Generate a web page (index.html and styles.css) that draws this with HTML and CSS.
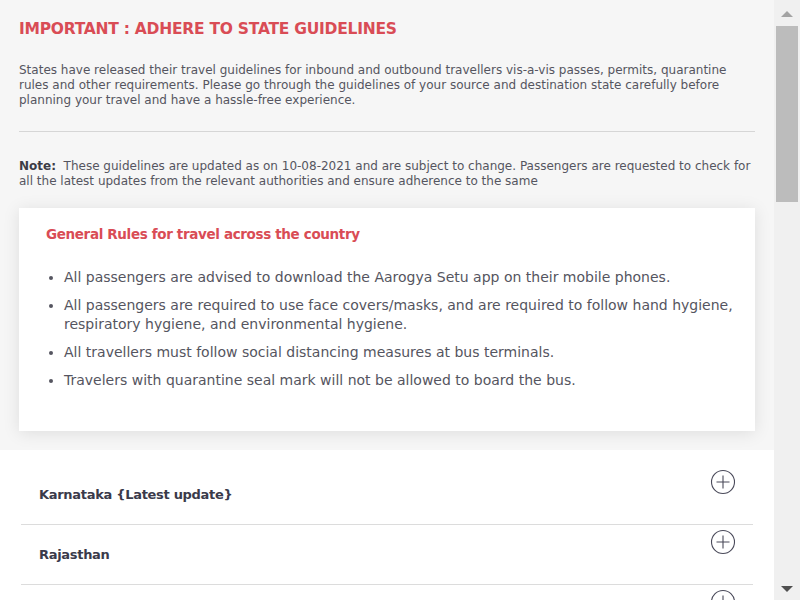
FILE: index.html
```html
<!DOCTYPE html>
<html lang="en">
<head>
<meta charset="utf-8">
<title>State Guidelines</title>
<link rel="stylesheet" href="styles.css">
</head>
<body>
<div class="app">
<main class="page">
  <section class="intro">
    <h1 class="title">IMPORTANT : ADHERE TO STATE GUIDELINES</h1>
    <p class="lead">States have released their travel guidelines for inbound and outbound travellers vis-a-vis passes, permits, quarantine rules and other requirements. Please go through the guidelines of your source and destination state carefully before planning your travel and have a hassle-free experience.</p>
    <hr class="rule">
    <p class="note"><b>Note:</b>&nbsp; These guidelines are updated as on 10-08-2021 and are subject to change. Passengers are requested to check for all the latest updates from the relevant authorities and ensure adherence to the same</p>
    <div class="card">
      <h2 class="card-title">General Rules for travel across the country</h2>
      <ul class="rules">
        <li>All passengers are advised to download the Aarogya Setu app on their mobile phones.</li>
        <li>All passengers are required to use face covers/masks, and are required to follow hand hygiene, respiratory hygiene, and environmental hygiene.</li>
        <li>All travellers must follow social distancing measures at bus terminals.</li>
        <li>Travelers with quarantine seal mark will not be allowed to board the bus.</li>
      </ul>
    </div>
  </section>
  <section class="states">
    <div class="state">
      <span class="state-name">Karnataka {Latest update}</span>
      <svg class="plus" width="26" height="26" viewBox="0 0 26 26"><circle cx="13" cy="13" r="11.5" fill="none" stroke="#4a4a5a" stroke-width="1.1"/><path d="M13 6.5v13M6.5 13h13" stroke="#4a4a5a" stroke-width="1.1"/></svg>
    </div>
    <div class="state">
      <span class="state-name">Rajasthan</span>
      <svg class="plus" width="26" height="26" viewBox="0 0 26 26"><circle cx="13" cy="13" r="11.5" fill="none" stroke="#4a4a5a" stroke-width="1.1"/><path d="M13 6.5v13M6.5 13h13" stroke="#4a4a5a" stroke-width="1.1"/></svg>
    </div>
    <div class="state">
      <span class="state-name">Maharashtra</span>
      <svg class="plus" width="26" height="26" viewBox="0 0 26 26"><circle cx="13" cy="13" r="11.5" fill="none" stroke="#4a4a5a" stroke-width="1.1"/><path d="M13 6.5v13M6.5 13h13" stroke="#4a4a5a" stroke-width="1.1"/></svg>
    </div>
  </section>
</main>
<div class="scrollbar" aria-hidden="true">
  <div class="sb-btn"><span class="arrow-up"></span></div>
  <div class="sb-thumb"></div>
  <div class="sb-track"></div>
  <div class="sb-btn"><span class="arrow-down"></span></div>
</div>
</div>
</body>
</html>
```

FILE: styles.css
```css
html, body {
  margin: 0;
  padding: 0;
}
body {
  font-family: "DejaVu Sans", "Noto Sans", sans-serif;
  color: #4f4f5a;
  background: #ffffff;
}
.app {
  display: flex;
  height: 600px;
  overflow: hidden;
}
.page {
  flex: 1;
  min-width: 0;
  display: flex;
  flex-direction: column;
}
.scrollbar {
  flex: 0 0 26px;
  background: #f0f0f0;
  display: flex;
  flex-direction: column;
}
.sb-btn {
  height: 26px;
  display: flex;
  align-items: center;
  justify-content: center;
}
.arrow-up {
  width: 0;
  height: 0;
  border-left: 6px solid transparent;
  border-right: 6px solid transparent;
  border-bottom: 6px solid #a3a3a3;
  margin-top: 1px;
}
.arrow-down {
  width: 0;
  height: 0;
  border-left: 6px solid transparent;
  border-right: 6px solid transparent;
  border-top: 6px solid #505050;
  margin-top: 3px;
}
.sb-thumb {
  height: 176px;
  margin: 0 2px;
  background: #bcbcbc;
}
.sb-track {
  flex: 1;
}
.intro {
  background: #f6f6f6;
  padding: 19px 19px 19px;
}
.title {
  margin: 0;
  font-size: 15.5px;
  letter-spacing: -0.25px;
  line-height: 20px;
  font-weight: bold;
  color: #d94c55;
}
.lead {
  margin: 24px 0 0;
  font-size: 12px;
  line-height: 15px;
  color: #555560;
}
.rule {
  margin: 23px 0 0;
  border: 0;
  border-top: 1px solid #d6d6d6;
  height: 0;
}
.note {
  margin: 27px 0 0;
  font-size: 12px;
  line-height: 15px;
  color: #555560;
}
.note b {
  color: #3c3c46;
}
.card {
  margin-top: 19px;
  background: #ffffff;
  box-shadow: 0 2px 16px rgba(0, 0, 0, 0.1);
  padding: 16px 18px 41px 27px;
}
.card-title {
  margin: 0;
  font-size: 13.5px;
  letter-spacing: -0.35px;
  line-height: 20px;
  font-weight: bold;
  color: #d94c55;
}
.rules {
  margin: 23.5px 0 0;
  padding-left: 18px;
  font-size: 14px;
  line-height: 19px;
  color: #555560;
}
.rules li + li {
  margin-top: 9px;
}
.states {
  background: #ffffff;
  padding: 15px 21px 0;
}
.state {
  box-sizing: border-box;
  flex: 0 0 60px;
  height: 60px;
  display: flex;
  justify-content: space-between;
  align-items: center;
  padding: 0 17px 0 18px;
  border-bottom: 1px solid #dcdcdc;
}
.state-name {
  font-size: 13px;
  letter-spacing: -0.3px;
  font-weight: bold;
  color: #3a3a4a;
}
.plus {
  align-self: flex-start;
  margin-top: 4px;
}
```
